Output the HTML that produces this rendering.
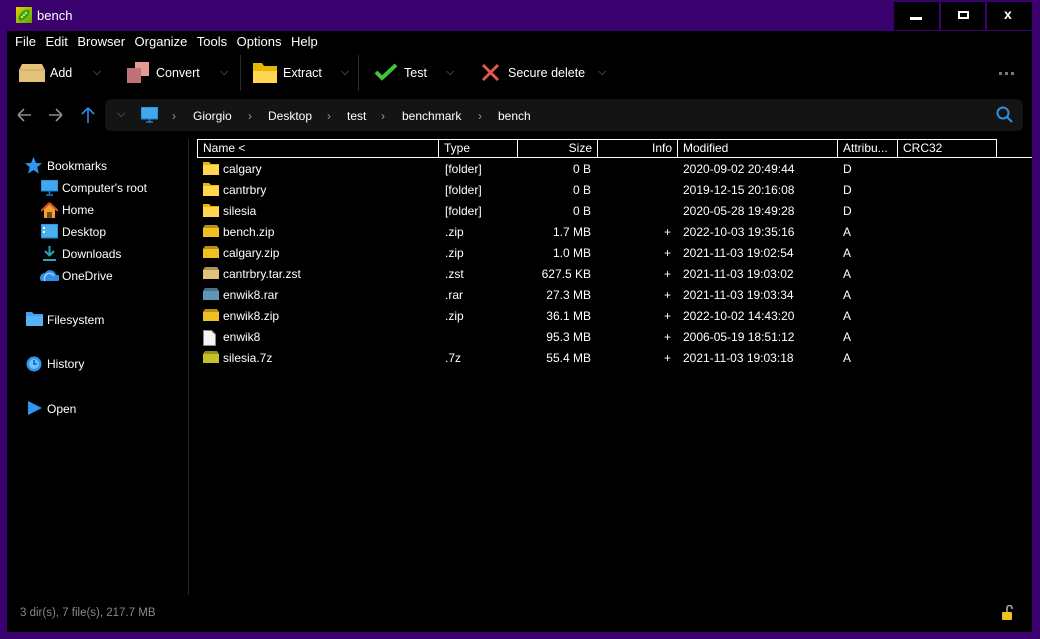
<!DOCTYPE html>
<html><head><meta charset="utf-8">
<style>
*{margin:0;padding:0;box-sizing:border-box}
body{width:1040px;height:639px;background:#3a006e;font-family:"Liberation Sans",sans-serif;font-size:12px;color:#fff;position:relative;overflow:hidden}
.a{position:absolute;white-space:nowrap}
#win{position:absolute;left:7px;top:31px;width:1025px;height:601px;background:#000}
.wb{position:absolute;top:2px;height:28px;background:#000}
.menu span{margin-right:9.5px}
.sep{position:absolute;width:1px;background:#2a2a2a}
.chev{color:#888;font-size:11px}
.hd{position:absolute;top:139px;height:19px;border:1px solid #fff;line-height:17px;padding:0 5px}
.row{position:absolute;left:197px;height:21px;line-height:21px;width:820px}
.row span{position:absolute}
</style></head><body>
<div class="a" style="left:16px;top:7px;width:16px;height:16px;background:linear-gradient(135deg,#e8d000,#5aa800);"></div>
<svg class="a" style="left:16px;top:7px" width="16" height="16"><ellipse cx="8" cy="8" rx="7" ry="3.5" transform="rotate(-45 8 8)" fill="#3a9a20"/><circle cx="6" cy="10" r="1.2" fill="#9f6"/><circle cx="8" cy="8" r="1.2" fill="#9f6"/><circle cx="10" cy="6" r="1.2" fill="#9f6"/></svg>
<div class="a" style="left:37px;top:8px;font-size:13px">bench</div>
<div class="wb" style="left:894px;width:45px"><div class="a" style="left:16px;top:15px;width:12px;height:3px;background:#fff"></div></div>
<div class="wb" style="left:941px;width:44px"><div class="a" style="left:17px;top:9px;width:11px;height:8px;border:2px solid #fff"></div></div>
<div class="wb" style="left:987px;width:45px"><div class="a" style="left:17px;top:4px;font-weight:bold;font-size:14px">x</div></div>

<div id="win"></div>
<div class="a menu" style="left:15px;top:34px;font-size:13px"><span>File</span><span>Edit</span><span>Browser</span><span>Organize</span><span>Tools</span><span>Options</span><span>Help</span></div>

<svg class="a" style="left:19px;top:62px" width="26" height="20"><path d="M3 2h20l3 6v12H0V8z" fill="#e3c179"/><path d="M0 8h26" stroke="#c9a45a"/></svg>
<div class="a" style="left:50px;top:66px;font-size:12.5px">Add</div>
<div class="a chev" style="left:93px;top:66px">⌵</div>
<div class="a" style="left:135px;top:62px;width:14px;height:14px;background:#e39c95"></div>
<div class="a" style="left:127px;top:68px;width:14px;height:15px;background:#c0727a"></div>
<div class="a" style="left:156px;top:66px;font-size:12.5px">Convert</div>
<div class="a chev" style="left:220px;top:66px">⌵</div>
<div class="sep" style="left:240px;top:55px;height:36px"></div>
<svg class="a" style="left:253px;top:62px" width="24" height="21"><path d="M0 1h9l2 3h13v17H0z" fill="#e8b600"/><rect x="0" y="9" width="24" height="12" fill="#ffd64d"/></svg>
<div class="a" style="left:283px;top:66px;font-size:12.5px">Extract</div>
<div class="a chev" style="left:341px;top:66px">⌵</div>
<div class="sep" style="left:358px;top:55px;height:36px"></div>
<svg class="a" style="left:374px;top:63px" width="24" height="18"><path d="M2 9l6 6L22 2" stroke="#45c23a" stroke-width="4" fill="none"/></svg>
<div class="a" style="left:404px;top:66px;font-size:12.5px">Test</div>
<div class="a chev" style="left:446px;top:66px">⌵</div>
<svg class="a" style="left:481px;top:63px" width="19" height="19"><path d="M2 2l15 15M17 2L2 17" stroke="#e0584c" stroke-width="3"/></svg>
<div class="a" style="left:508px;top:66px;font-size:12.5px">Secure delete</div>
<div class="a chev" style="left:598px;top:66px">⌵</div>
<div class="a" style="left:999px;top:72px;width:16px;height:3px;background:repeating-linear-gradient(90deg,#777 0 3px,transparent 3px 6px)"></div>

<svg class="a" style="left:16px;top:107px" width="80" height="16"><path d="M2 8h13M2 8l6-6M2 8l6 6" stroke="#8a8a8a" stroke-width="1.6" fill="none"/><path d="M46 8h-13M46 8l-6-6M46 8l-6 6" stroke="#8a8a8a" stroke-width="1.6" fill="none"/><path d="M72 1v15M72 1l-6 6M72 1l6 6" stroke="#2f8fe6" stroke-width="1.6" fill="none"/></svg>
<div class="a" style="left:105px;top:99px;width:918px;height:32px;background:#141414;border-radius:6px"></div>
<div class="a chev" style="left:117px;top:108px">⌵</div>
<svg class="a" style="left:141px;top:107px" width="17" height="17"><rect x="0" y="0" width="17" height="12" fill="#3fa8ef"/><rect x="0" y="0" width="17" height="12" fill="none" stroke="#1e7fd0"/><path d="M8.5 12v3M5 15h7" stroke="#1e7fd0" stroke-width="1.5"/></svg>
<div class="a" style="left:172px;top:109px;color:#999">›</div>
<div class="a" style="left:193px;top:109px">Giorgio</div>
<div class="a" style="left:248px;top:109px;color:#999">›</div>
<div class="a" style="left:268px;top:109px">Desktop</div>
<div class="a" style="left:327px;top:109px;color:#999">›</div>
<div class="a" style="left:347px;top:109px">test</div>
<div class="a" style="left:381px;top:109px;color:#999">›</div>
<div class="a" style="left:402px;top:109px">benchmark</div>
<div class="a" style="left:478px;top:109px;color:#999">›</div>
<div class="a" style="left:498px;top:109px">bench</div>
<svg class="a" style="left:996px;top:106px" width="18" height="18"><circle cx="7" cy="7" r="5.5" stroke="#2f8fe6" stroke-width="2" fill="none"/><path d="M11 11l5 5" stroke="#2f8fe6" stroke-width="2"/></svg>

<svg class="a" style="left:25px;top:157px" width="17" height="17"><path d="M8.5 0l2.5 6 6 .3-4.7 4 1.6 6.3-5.4-3.5-5.4 3.5 1.6-6.3L0 6.3 6 6z" fill="#2f95f0"/></svg>
<div class="a" style="left:47px;top:159px">Bookmarks</div>
<svg class="a" style="left:41px;top:180px" width="17" height="16"><rect width="17" height="11" fill="#3fa8ef" stroke="#1e7fd0"/><path d="M8.5 11v3M5 15h7" stroke="#1e7fd0" stroke-width="1.5"/></svg>
<div class="a" style="left:62px;top:181px">Computer's root</div>
<svg class="a" style="left:41px;top:202px" width="17" height="16"><path d="M8.5 1L1 8h2v8h11V8h2z" fill="#f0a030"/><path d="M8.5 1L0 9M8.5 1L17 9" stroke="#d94a2a" stroke-width="2"/><rect x="6" y="10" width="5" height="6" fill="#7a4a10"/></svg>
<div class="a" style="left:62px;top:203px">Home</div>
<svg class="a" style="left:41px;top:224px" width="17" height="15"><rect width="17" height="14" fill="#4ab0ec" stroke="#1e7fd0"/><rect x="2" y="3" width="2" height="2" fill="#fff"/><rect x="2" y="7" width="2" height="2" fill="#fff"/></svg>
<div class="a" style="left:62px;top:225px">Desktop</div>
<svg class="a" style="left:41px;top:245px" width="17" height="17"><path d="M8.5 1v9M4 6l4.5 4.5L13 6" stroke="#2aa5b8" stroke-width="2" fill="none"/><path d="M2 15h13" stroke="#2aa5b8" stroke-width="2"/></svg>
<div class="a" style="left:62px;top:247px">Downloads</div>
<svg class="a" style="left:40px;top:268px" width="19" height="14"><path d="M1 13a5 5 0 0 1 4-8 6 6 0 0 1 11 2 3 3 0 0 1 2 6z" fill="#2f8fe6"/><path d="M5 13a5 5 0 0 1 9-5" stroke="#9ad0ff" stroke-width="1.4" fill="none"/></svg>
<div class="a" style="left:62px;top:269px">OneDrive</div>
<svg class="a" style="left:26px;top:312px" width="17" height="14"><path d="M0 0h6l2 2h9v12H0z" fill="#3fa0ef"/><rect y="4" width="17" height="10" fill="#56b4f5"/></svg>
<div class="a" style="left:47px;top:313px">Filesystem</div>
<svg class="a" style="left:25px;top:355px" width="17" height="17"><circle cx="9" cy="9" r="7.5" fill="#2f95f0"/><circle cx="9" cy="9" r="5" fill="#6ec0ff"/><path d="M9 5v4h3" stroke="#1060b0" stroke-width="1.5" fill="none"/></svg>
<div class="a" style="left:47px;top:357px">History</div>
<svg class="a" style="left:28px;top:401px" width="14" height="14"><path d="M0 0l14 7-14 7z" fill="#2f95f0"/></svg>
<div class="a" style="left:47px;top:402px">Open</div>
<div class="sep" style="left:188px;top:139px;height:456px;background:#262626"></div>

<div class="a" style="left:197px;top:157px;width:835px;height:1px;background:#fff"></div>
<div class="hd" style="left:197px;width:242px">Name &lt;</div>
<div class="hd" style="left:438px;width:80px">Type</div>
<div class="hd" style="left:517px;width:81px;text-align:right">Size</div>
<div class="hd" style="left:597px;width:81px;text-align:right">Info</div>
<div class="hd" style="left:677px;width:161px">Modified</div>
<div class="hd" style="left:837px;width:61px">Attribu...</div>
<div class="hd" style="left:897px;width:100px">CRC32</div>

<div id="rows"></div>
<script>
var R=[["calgary","f","[folder]","0 B","","2020-09-02 20:49:44","D"],
["cantrbry","f","[folder]","0 B","","2019-12-15 20:16:08","D"],
["silesia","f","[folder]","0 B","","2020-05-28 19:49:28","D"],
["bench.zip","#f0c020",".zip","1.7 MB","+","2022-10-03 19:35:16","A"],
["calgary.zip","#f0c020",".zip","1.0 MB","+","2021-11-03 19:02:54","A"],
["cantrbry.tar.zst","#e3c179",".zst","627.5 KB","+","2021-11-03 19:03:02","A"],
["enwik8.rar","#5f95b8",".rar","27.3 MB","+","2021-11-03 19:03:34","A"],
["enwik8.zip","#f0c020",".zip","36.1 MB","+","2022-10-02 14:43:20","A"],
["enwik8","d","","95.3 MB","+","2006-05-19 18:51:12","A"],
["silesia.7z","#c4c02a",".7z","55.4 MB","+","2021-11-03 19:03:18","A"]];
var h="";
R.forEach(function(r,i){
 var t=159+i*21,ic;
 if(r[1]=="f")ic='<svg width="16" height="13"><path d="M0 0h6l2 2h8v11H0z" fill="#e8b600"/><rect y="3" width="16" height="10" fill="#ffd64d"/></svg>';
 else if(r[1]=="d")ic='<svg width="13" height="16"><path d="M.5.5h8l4 4v11H.5z" fill="#f4f4f4" stroke="#888"/></svg>';
 else ic='<svg width="16" height="12"><path d="M2 0h12l2 3v9H0V3z" fill="'+r[1]+'" opacity=".75"/><rect y="3" width="16" height="9" fill="'+r[1]+'"/></svg>';
 h+='<div class="row" style="top:'+t+'px"><span style="left:6px;top:3px;line-height:0">'+ic+'</span><span style="left:26px">'+r[0]+'</span><span style="left:248px">'+r[2]+'</span><span style="right:426px">'+r[3]+'</span><span style="right:346px">'+r[4]+'</span><span style="left:486px">'+r[5]+'</span><span style="left:646px">'+r[6]+'</span></div>';
});
document.getElementById("rows").innerHTML=h;
</script>

<div class="a" style="left:20px;top:607px;color:#888;font-size:11.5px">3 dir(s), 7 file(s), 217.7 MB</div>
<svg class="a" style="left:1001px;top:605px" width="12" height="15"><path d="M6 7V3a2.5 2.5 0 0 1 5 0v1" stroke="#aaa" stroke-width="1.6" fill="none"/><rect x="1" y="7" width="10" height="8" rx="1" fill="#f0c020"/></svg>
</body></html>
